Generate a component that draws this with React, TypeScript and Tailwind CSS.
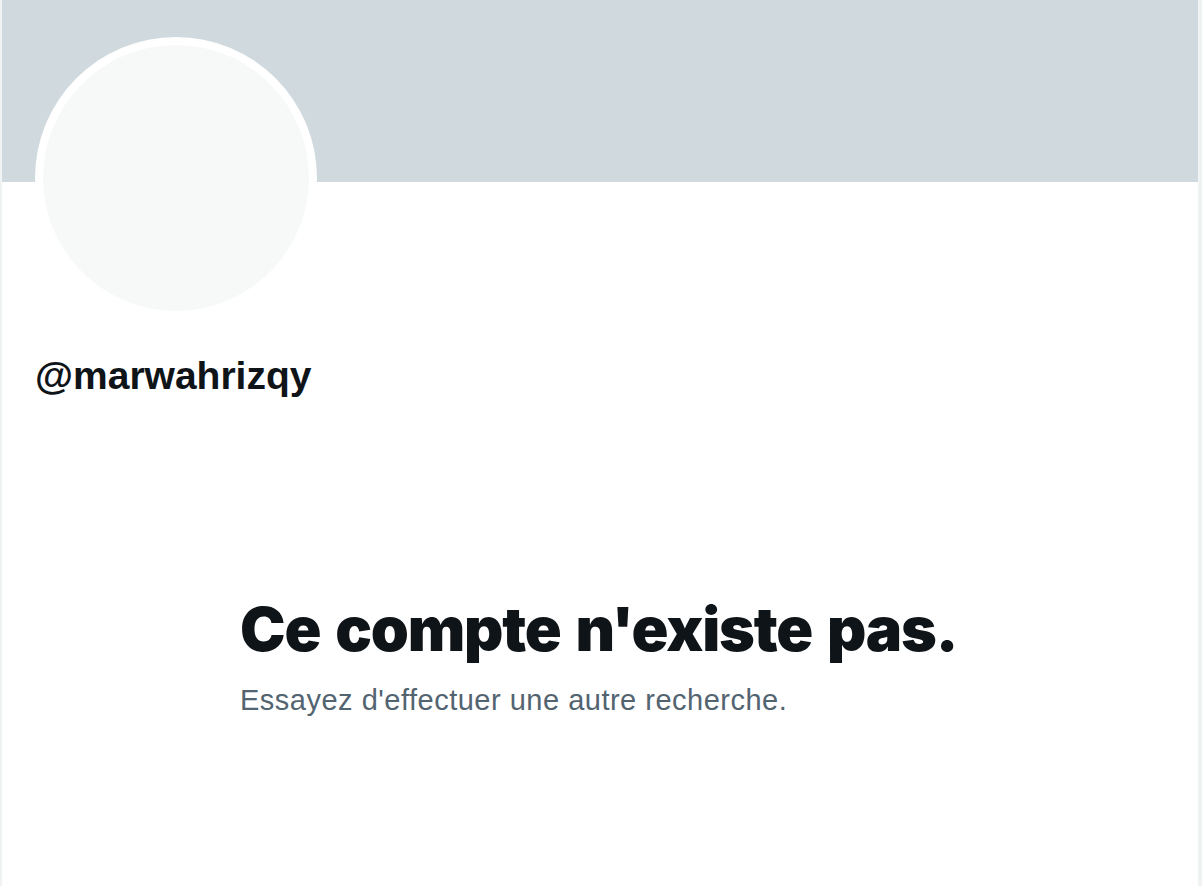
export default function App() {
  return (
    <div className="w-[1202px] h-[886px] bg-white flex overflow-hidden" style={{ fontFamily: '"Liberation Sans", Arial, sans-serif' }}>
      <div className="w-[2px] bg-[#eff3f4] shrink-0" />
      <div className="flex-1 flex flex-col">
        <div className="h-[182px] bg-[#cfd9de] shrink-0" />
        <div className="ml-[33px] mt-[-145px] w-[282px] h-[282px] rounded-full bg-white p-[8px] shrink-0">
          <div className="w-full h-full rounded-full bg-[#f7f9f9]" />
        </div>
        <div className="ml-[33px] mt-[33px] text-[39px] leading-[48px] font-bold text-[#0f1419]">@marwahrizqy</div>
        <div className="ml-[238px] mt-[191px] flex flex-col">
          <div className="text-[61px] leading-[76px] font-black tracking-[-1.2px] [word-spacing:4px] text-[#0f1419]" style={{ fontFamily: 'Inter, "Liberation Sans", sans-serif' }}>Ce compte n'existe pas.</div>
          <div className="mt-[15px] text-[29px] leading-[36px] tracking-[0.5px] text-[#536471]">Essayez d'effectuer une autre recherche.</div>
        </div>
      </div>
      <div className="w-[4px] bg-[#eff3f4] shrink-0" />
    </div>
  );
}
